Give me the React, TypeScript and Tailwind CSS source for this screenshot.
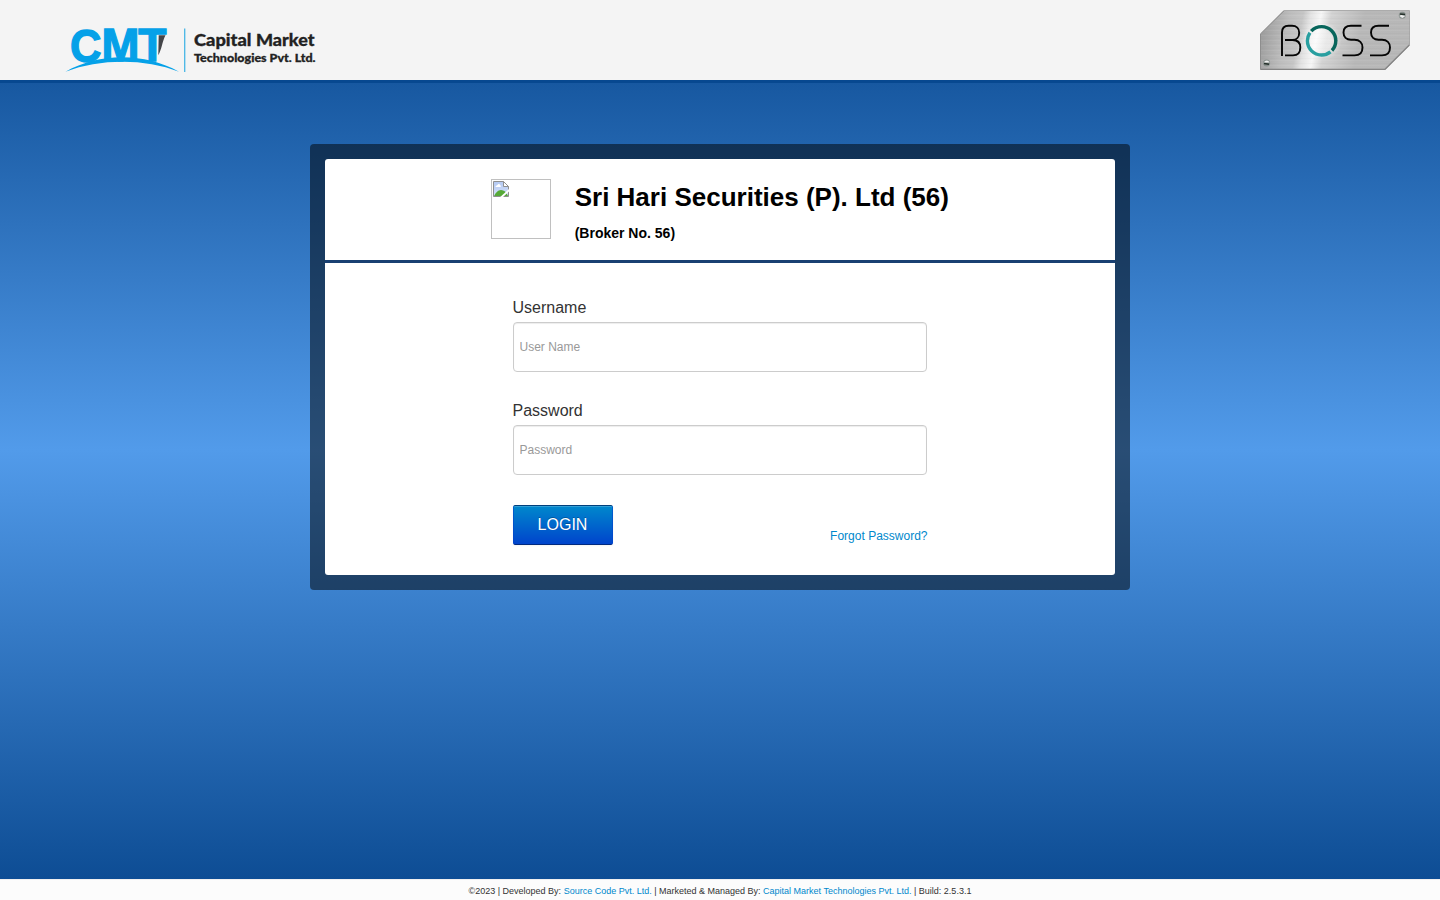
import React from "react";

function CmtLogo() {
  return (
    <svg width="252" height="60" viewBox="65 14 252 60" role="img" aria-label="CMT Capital Market Technologies">
      <g fontFamily="'Liberation Sans', Arial, sans-serif" fontWeight="700" fill="#05a1e8" stroke="#05a1e8">
        <text x="70" y="61.500" fontSize="46.500" strokeWidth="1.300" textLength="31.500" lengthAdjust="spacingAndGlyphs">C</text>
        <text x="101.500" y="61.200" fontSize="47" strokeWidth="1.300" textLength="38" lengthAdjust="spacingAndGlyphs">M</text>
        <text x="138.300" y="61.200" fontSize="47" strokeWidth="1.300" textLength="28.200" lengthAdjust="spacingAndGlyphs">T</text>
      </g>
      <path d="M158.700 35.300h6.800c-3.500 7-3.700 14-7.200 20z" fill="#444548" />
      <path d="M65.500 71.800C99 52.500 145 52.500 179 71.800C145 58.500 100 58.500 65.500 71.800z" fill="#05a1e8" />
      <path d="M184.700 28.500v43.500" stroke="#47b6e5" strokeWidth="1.300" />
      <g fontFamily="Lato, 'Liberation Sans', sans-serif" fontWeight="900" fill="#222" stroke="#222" strokeWidth=".3">
        <text x="194" y="45.700" fontSize="16.500" textLength="57.500" lengthAdjust="spacingAndGlyphs">Capital</text>
        <text x="256" y="45.700" fontSize="16.500" textLength="58.500" lengthAdjust="spacingAndGlyphs">Market</text>
        <text x="194" y="62.300" fontSize="11.800" textLength="121.500" lengthAdjust="spacingAndGlyphs">Technologies Pvt. Ltd.</text>
      </g>
    </svg>
  );
}

function BossLogo() {
  return (
    <svg width="150" height="60" viewBox="0 0 150 60" role="img" aria-label="BOSS">
      <defs>
        <linearGradient id="steel" x2="1" y2=".08">
          <stop offset="0" stopColor="#969696" />
          <stop offset=".2" stopColor="#bdbdbd" />
          <stop offset=".29" stopColor="#c6c6c6" />
          <stop offset=".34" stopColor="#e2e2e2" />
          <stop offset=".41" stopColor="#f6f6f6" />
          <stop offset=".48" stopColor="#d3d3d3" />
          <stop offset=".7" stopColor="#b8b8b8" />
          <stop offset="1" stopColor="#b7b7b7" />
        </linearGradient>
        <pattern id="brush" width="150" height="5" patternUnits="userSpaceOnUse">
          <path d="M0 .5H150" stroke="#fff" strokeOpacity=".06" />
          <path d="M0 3.500H150" stroke="#555" strokeOpacity=".03" />
        </pattern>
        <radialGradient id="glow">
          <stop offset=".5" stopColor="#fff" stopOpacity=".5" />
          <stop offset="1" stopColor="#fff" stopOpacity="0" />
        </radialGradient>
      </defs>
      <path d="M24 .5H149.500V35L125 59.500H.5V24z" fill="url(#steel)" stroke="#a8a8a8" />
      <path d="M24 .5H149.500V35L125 59.500H.5V24z" fill="url(#brush)" />
      <path d="M149.300 35L125 59.300H.5" fill="none" stroke="#858585" strokeWidth="1.300" />
      <path d="M.5 59V24L24 .8" fill="none" stroke="#8e8e8e" />
      <g fill="none" stroke="#050505" strokeWidth="1.900">
        <path d="M22 46V22.500C22 17.800 24.500 15.800 28.500 15.800H32C36.500 15.800 39.200 18.600 39.200 22.700C39.200 27 36.500 30 32.500 30H25M32.500 30C37.500 30 40.300 33 40.300 37.500C40.300 42.500 37.500 45.400 33 45.400H25" />
        <path id="letter-s" d="M101.500 15.800H91C86 15.800 83.500 18.500 83.500 22.500C83.500 27 86.500 29.700 91 29.700H94.500C99.500 29.700 102.500 33 102.500 37.500C102.500 42.500 99.500 45.400 94.500 45.400H82.500" />
        <use href="#letter-s" x="27.500" />
      </g>
      <circle cx="61.600" cy="30.800" r="20" fill="url(#glow)" />
      <g fill="none" strokeWidth="3.400">
        <circle cx="61.600" cy="30.800" r="14.200" stroke="#08665c" pathLength="360" strokeDasharray="137.500 222.500" strokeDashoffset="-223" />
        <circle cx="61.600" cy="30.800" r="14.200" stroke="#08665c" pathLength="360" strokeDasharray="43 317" />
        <circle cx="61.600" cy="30.800" r="14.200" stroke="#299fa0" pathLength="360" strokeDasharray="164 196" strokeDashoffset="-51" />
      </g>
      <g>
        <circle cx="6.600" cy="53" r="3.500" fill="#8a928f" />
        <path d="M3.600 52.500c2-2.700 4.500-2.700 6 0z" fill="#eee" />
        <path d="M4 53.500l5 .8" stroke="#26322c" strokeWidth="1.600" />
        <circle cx="142.300" cy="5.200" r="3.500" fill="#8a928f" />
        <path d="M139.300 6c2-2 4.500-2 6 0l-3 2z" fill="#eee" />
        <path d="M140 4l5 .6" stroke="#26322c" strokeWidth="1.600" />
      </g>
    </svg>
  );
}

function MissingImage() {
  return (
    <div className="h-[60px] w-[60px] border border-[#c0c0c0] p-px">
      <svg width="16" height="16" viewBox="0 0 16 16">
        <defs>
          <linearGradient id="sky" x2="0" y2="1">
            <stop stopColor="#b4c9f2" />
            <stop offset="1" stopColor="#d3e0fa" />
          </linearGradient>
        </defs>
        <path d="M.5.500H10.500L15.500 5.500V15.500H.5z" fill="url(#sky)" />
        <path d="M1 15C2.500 12 5 9 8 9C11 9 13.500 11 15 15z" fill="#56a937" />
        <path d="M.5.500H10.500L15.500 5.500V15.500H.5z" fill="none" stroke="#8f8f8f" />
        <path d="M10.500.5V5.500H15.500z" fill="#fff" stroke="#8f8f8f" />
        <path d="M2.500 6c0-1.500 1.500-1.500 2-2C5 2.500 7 3 7 4.200c1.300 0 1.300 1.800 0 1.800z" fill="#fff" />
        <path d="M16 8V10.500L10 16H7.200z" fill="#fff" />
      </svg>
    </div>
  );
}

interface FieldProps {
  id: string;
  label: string;
  placeholder: string;
  type: string;
}

function Field({ id, label, placeholder, type }: FieldProps) {
  return (
    <div className="mb-[29px]">
      <label htmlFor={id} className="mb-1 block text-[16px] leading-5 text-[#333]">{label}</label>
      <input
        id={id}
        type={type}
        placeholder={placeholder}
        className="block h-[50px] w-[414.600px] rounded-[4px] border border-[#ccc] bg-white px-[6px] text-[12px] shadow-[inset_0_1px_1px_rgba(0,0,0,0.075)] outline-none placeholder:text-[#999]"
      />
    </div>
  );
}

export default function App() {
  return (
    <div className="flex h-[900px] flex-col bg-[linear-gradient(to_bottom,#0a4990_0%,#529bea_50%,#0a4990_100%)] font-['Liberation_Sans',Arial,sans-serif]">
      <header className="flex h-[83px] shrink-0 items-start justify-between border-b-[3px] border-[#074890] bg-[#f4f4f4] pl-[65px] pr-[30px]">
        <div className="pt-[14px]"><CmtLogo /></div>
        <div className="pt-[10px]"><BossLogo /></div>
      </header>

      <main className="flex flex-1 justify-center pt-[61px]">
        <div className="h-[446px] w-[820px] rounded-[4px] bg-black/50 p-[15px]">
          <div className="h-[416px] rounded-[3px] bg-white">
            <div className="flex h-[104px] justify-center gap-[23.600px] border-b-[3px] border-[#194072] pt-5">
              <MissingImage />
              <div className="font-bold text-black">
                <h1 className="text-[26px] leading-[36px]">Sri Hari Securities (P). Ltd (56)</h1>
                <p className="mt-2 text-[14px] leading-5">(Broker No. 56)</p>
              </div>
            </div>
            <form className="ml-[187.500px] w-[415px] pt-[35px]" onSubmit={(e) => e.preventDefault()}>
              <Field id="username" label="Username" placeholder="User Name" type="text" />
              <Field id="password" label="Password" placeholder="Password" type="password" />
              <div className="flex h-[41px] items-start justify-between pt-px">
                <button
                  type="submit"
                  className="h-10 w-[100px] rounded-[2px] border border-x-[#0044cc]/60 border-t-[#00407c] border-b-[#002a80] bg-[linear-gradient(to_bottom,#0088cc,#0044cc)] text-[16px] leading-5 text-white shadow-[inset_0_1px_0_rgba(255,255,255,0.2),0_1px_2px_rgba(0,0,0,0.05)] [text-shadow:0_-1px_0_rgba(0,0,0,0.25)]"
                >
                  LOGIN
                </button>
                <a href="#" className="mt-[21px] text-[12px] leading-5 text-[#0088cc]">Forgot Password?</a>
              </div>
            </form>
          </div>
        </div>
      </main>

      <footer className="h-[21px] shrink-0 border-t border-[#f0f0f0] bg-[#fcfcfc] pt-px text-center text-[9px] leading-5 text-[#333]">
        ©2023 | Developed By: <a href="#" className="text-[#0088cc]">Source Code Pvt. Ltd.</a> | Marketed &amp; Managed By: <a href="#" className="text-[#0088cc]">Capital Market Technologies Pvt. Ltd.</a> | Build: 2.5.3.1
      </footer>
    </div>
  );
}
